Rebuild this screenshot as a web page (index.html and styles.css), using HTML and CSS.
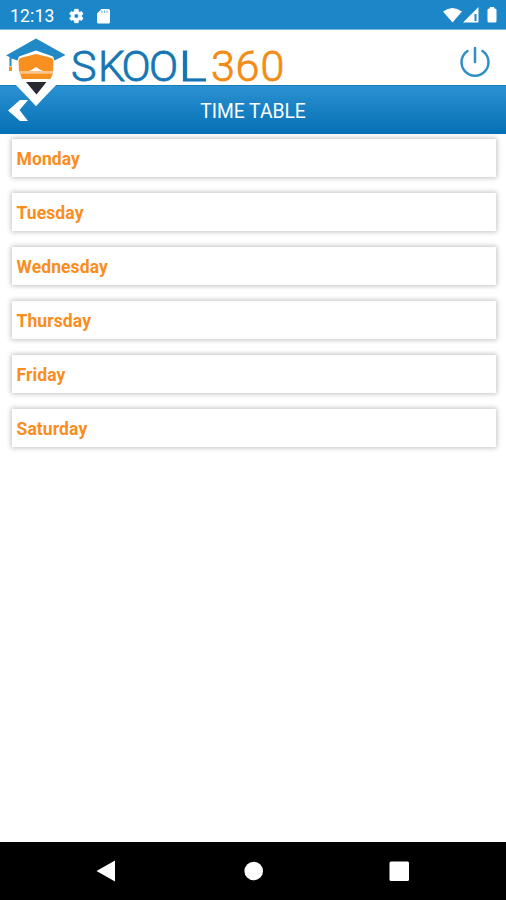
FILE: index.html
```html
<!DOCTYPE html>
<html lang="en">
<head>
<meta charset="utf-8">
<title>Time Table</title>
<link rel="stylesheet" href="styles.css">
</head>
<body>
<div class="app">
  <div class="status">
    <span class="clock">12:13</span>
    <svg class="gear" width="18" height="18" viewBox="0 0 24 24"><path fill="#fff" fill-rule="evenodd" d="M19.400 13c.1-.7.1-1.300 0-2l2.100-1.600-2-3.500-2.500 1a7 7 0 0 0-1.700-1L15 3h-5l-.4 2.900a7 7 0 0 0-1.700 1l-2.400-1-2 3.500L5.600 11a7 7 0 0 0 0 2l-2.100 1.600 2 3.500 2.400-1a7 7 0 0 0 1.700 1L10 21h5l.3-2.900a7 7 0 0 0 1.700-1l2.500 1 2-3.500zM12.500 9a3 3 0 1 1 0 6 3 3 0 0 1 0-6z" stroke="#fff" stroke-width=".8"/></svg>
    <svg class="sd" width="13" height="16" viewBox="0 0 13 16"><path fill="#fff" d="M4.500 1H11.500Q13 1 13 2.500V14Q13 15.500 11.500 15.500H1.500Q0 15.500 0 14V5.500Z"/><path stroke="#75b6df" stroke-width="1" d="M5 2.500v2.500M7.500 2.500v2.500M10 2.500v2.500"/></svg>
    <svg class="signals" width="56" height="18" viewBox="0 0 56 18"><path fill="#fff" d="M0 4.500Q9.500-2.500 19 4.500L9.500 15.500Z"/><path fill="#fff" fill-rule="evenodd" d="M20 15.500L35.500 0V15.500ZM31.500 7V14h2V7Z"/><path fill="#fff" d="M44.500 3q0-1.500 1.500-1.500h.8V0h4.400v1.500h.8q1.500 0 1.500 1.500v11q0 1.500-1.500 1.500h-6q-1.500 0-1.500-1.500z"/></svg>
  </div>
  <div class="brand">
    <svg class="wordmark" width="290" height="66" viewBox="0 0 290 66">
      <text class="skool" y="51" x="71 98 121.500 149">SKOO<tspan x="178.500" textLength="28.500" lengthAdjust="spacingAndGlyphs">L</tspan></text>
      <text class="num" y="51" x="211 235.500 260.500">360</text>
    </svg>
    <svg class="power" width="32" height="32" viewBox="0 0 32 32" fill="none" stroke="#2f8fc6" stroke-width="2.500" stroke-linecap="round"><path d="M8.500 5A13.500 13.500 0 1 0 23.500 5M16 2V16"/></svg>
  </div>
  <div class="titlebar">
    <svg class="back" width="22" height="24" viewBox="0 0 22 24"><path fill="#fff" d="M12 1H20L11.500 11 20 22H12L0 11.500Z"/></svg>
    <h1>TIME TABLE</h1>
  </div>
  <ul class="days">
    <li>Monday</li><li>Tuesday</li><li>Wednesday</li><li>Thursday</li><li>Friday</li><li>Saturday</li>
  </ul>
  <div class="nav">
    <svg width="506" height="58" viewBox="0 0 506 58" fill="#fff"><path d="M96.500 29L115 18.500V39.500Z"/><circle cx="253.700" cy="29" r="9.300"/><rect x="389.500" y="19.500" width="19.500" height="19.500" rx="1.500"/></svg>
  </div>
  <svg class="emblem" width="66" height="76" viewBox="0 0 66 76">
    <path fill="#fff" d="M15 30V52L36 76 55 54V30Z"/>
    <path fill="#fff" d="M14 53L36 76 58 53Z"/>
    <path fill="#f7901e" d="M18.500 31Q18.500 28.500 22 27.500L36 24 50 27.500Q53.500 28.500 53.500 31L53 41H19Z"/>
    <path fill="#fff" d="M29 41Q33 39.500 36 37 39 39.500 43 41Z"/>
    <path fill="#fbc68c" d="M19 41H53V43.500H19.500Z"/>
    <path fill="#f7901e" d="M20 43.500H53L50.500 49H22Z"/>
    <path fill="#292932" d="M26 52H46.500L36.500 64.500Z"/>
    <path fill="#2189c5" d="M6 25.500L36 8.500 65.500 25 54.500 30.500 53 26.500 36 20.500 19 26.500 17.500 30.500 11.500 28.500V36H9.500V27Z"/>
    <path fill="#f7901e" d="M9 36.500h3V41H9z"/>
  </svg>
</div>
</body>
</html>
```
FILE: styles.css
```css
* { box-sizing: border-box; }
body { margin: 0; font-family: Roboto, "Liberation Sans", sans-serif; }
.app { position: relative; display: flex; flex-direction: column; width: 506px; height: 900px; background: #fff; overflow: hidden; }
.status { display: flex; align-items: center; height: 30px; padding: 2px 8px 0 10px; background: #1b87c9; border-bottom: 1px solid #79b9e0; }
.clock { width: 57px; color: #fff; font-size: 17.500px; letter-spacing: .2px; }
.sd { margin-left: 12px; }
.signals { margin-left: auto; margin-right: -1px; }
.brand { display: flex; align-items: flex-start; justify-content: space-between; height: 55px; padding-right: 15px; }
.wordmark { display: block; }
.skool, .num { font-size: 43px; font-weight: 300; stroke-width: .8px; }
.skool { fill: #1476b4; stroke: #1476b4; }
.num { fill: #f28c16; stroke: #f28c16; }
.power { margin-top: 16px; }
.titlebar { display: grid; grid-template-columns: 22px 1fr 30px; align-items: center; height: 49px; padding-left: 8px; background: linear-gradient(#2b91d2, #0470b3); border-top: 1px solid #1780bb; }
.back { margin-top: 2px; }
h1 { margin: 3px 0 0; color: #fff; font-size: 19.300px; font-weight: 400; line-height: 24px; text-align: center; }
.days { display: flex; flex: 1; flex-direction: column; gap: 16px; margin: 0; padding: 5px 10px 0 12px; list-style: none; }
.days li { height: 38px; padding-left: 4.500px; color: #f98d20; font-size: 17.500px; font-weight: 700; letter-spacing: .1px; line-height: 40px; background: #fff; box-shadow: 0 0 5px 1px rgba(0,0,0,.24); }
.nav { height: 58px; background: #000; }
.nav svg { display: block; }
.emblem { position: absolute; top: 30px; left: 0; }
```
